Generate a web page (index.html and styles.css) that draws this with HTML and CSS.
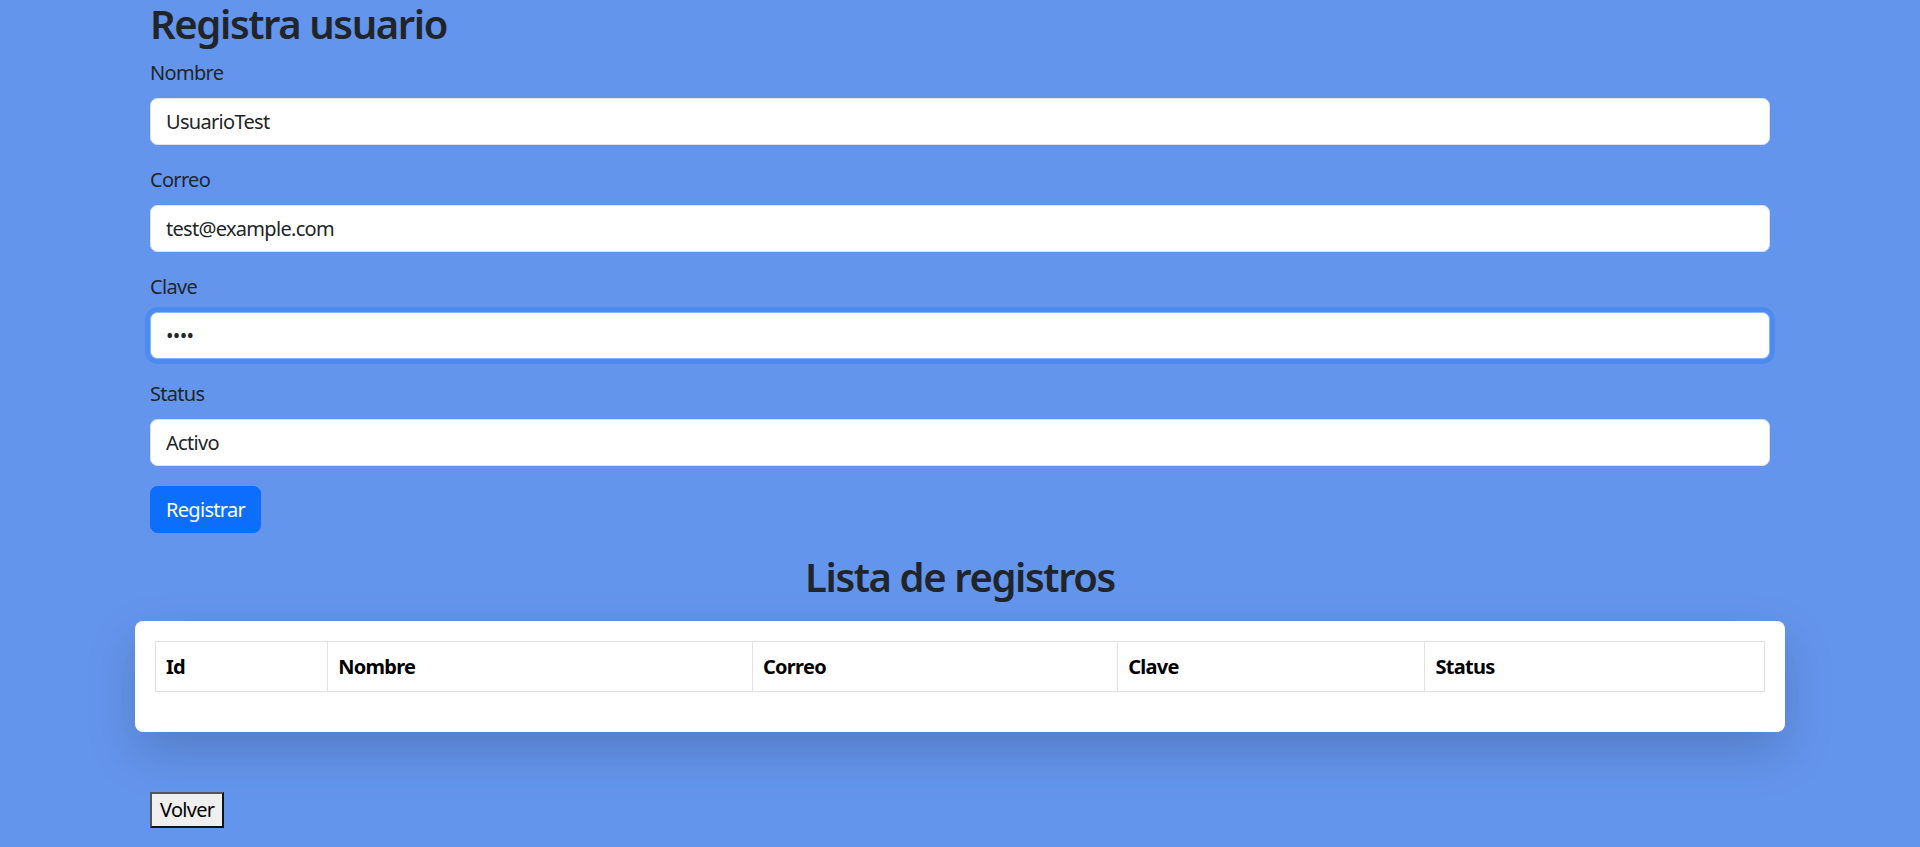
FILE: index.html
```html
<!DOCTYPE html>
<html lang="es">
<head>
<meta charset="utf-8">
<title>Registra usuario</title>
<link rel="stylesheet" href="styles.css">
</head>
<body>
<div class="container">
  <h2 class="title">Registra usuario</h2>
  <form class="form">
    <div class="field">
      <label class="label">Nombre</label>
      <input class="control" type="text" value="UsuarioTest">
    </div>
    <div class="field">
      <label class="label">Correo</label>
      <input class="control" type="text" value="test@example.com">
    </div>
    <div class="field">
      <label class="label">Clave</label>
      <input class="control focused" type="password" value="1234">
    </div>
    <div class="field">
      <label class="label">Status</label>
      <input class="control" type="text" value="Activo">
    </div>
    <button type="button" class="btn-primary">Registrar</button>
  </form>
  <h2 class="list-title">Lista de registros</h2>
</div>
<div class="card">
  <table class="table">
    <colgroup>
      <col class="c1"><col class="c2"><col class="c3"><col class="c4"><col class="c5">
    </colgroup>
    <thead>
      <tr><th>Id</th><th>Nombre</th><th>Correo</th><th>Clave</th><th>Status</th></tr>
    </thead>
    <tbody></tbody>
  </table>
</div>
<div class="container">
  <button type="button" class="btn-back">Volver</button>
</div>
</body>
</html>
```

FILE: styles.css
```css
* { box-sizing: border-box; }
html, body { margin: 0; padding: 0; }
body {
  background: #6495ed;
  color: #212529;
  font-family: "Noto Sans", "Open Sans", sans-serif;
  font-size: 20px;
  line-height: 1.5;
  letter-spacing: -0.035em;
  height: 847px;
  overflow: hidden;
}
.container {
  width: 1650px;
  margin: 0 auto;
  padding: 0 15px;
}
.title, .list-title {
  font-size: 40px;
  font-weight: 560;
  line-height: 1.2;
  margin: 0 0 10px;
  letter-spacing: -0.035em;
}
.list-title {
  text-align: center;
  margin: 20px 0 20px;
}
.form { display: flex; flex-direction: column; }
.field { display: flex; flex-direction: column; margin-bottom: 20px; }
.label { margin-bottom: 10px; line-height: 30px; }
.control {
  display: block;
  width: 100%;
  font: inherit;
  font-size: 20px;
  line-height: 30px;
  letter-spacing: -0.035em;
  color: #212529;
  background: #fff;
  padding: 7.5px 15px;
  border: 1px solid #dee2e6;
  border-radius: 7.5px;
  outline: none;
}
.control.focused {
  border-color: #86b7fe;
  box-shadow: 0 0 0 5px rgba(13, 110, 253, 0.25);
}
.btn-primary {
  align-self: flex-start;
  font: inherit;
  font-size: 20px;
  line-height: 30px;
  letter-spacing: -0.035em;
  color: #fff;
  background: #0d6efd;
  border: 1px solid #0d6efd;
  border-radius: 7.5px;
  padding: 7.5px 15px;
}
.card {
  width: 1650px;
  margin: 0 auto;
  background: #fff;
  border-radius: 8px;
  padding: 20px;
  box-shadow: 0 20px 50px rgba(0, 0, 0, 0.17);
}
.table {
  width: 100%;
  border-collapse: collapse;
  margin-bottom: 20px;
  color: #000;
}
.table th {
  text-align: left;
  font-weight: 700;
  padding: 9.5px 10px;
  border: 1px solid #dee2e6;
  line-height: 30px;
}
.c1 { width: 10.7%; }
.c2 { width: 26.4%; }
.c3 { width: 22.7%; }
.c4 { width: 19.1%; }
.c5 { width: 21.1%; }
.btn-back {
  margin-top: 60px;
  font: inherit;
  font-size: 20px;
  line-height: 28px;
  letter-spacing: -0.035em;
  color: #000;
  background: #efefef;
  border: 2px solid;
  border-color: #555 #111 #111 #555;
  border-radius: 0;
  padding: 2px 8px;
}
```
